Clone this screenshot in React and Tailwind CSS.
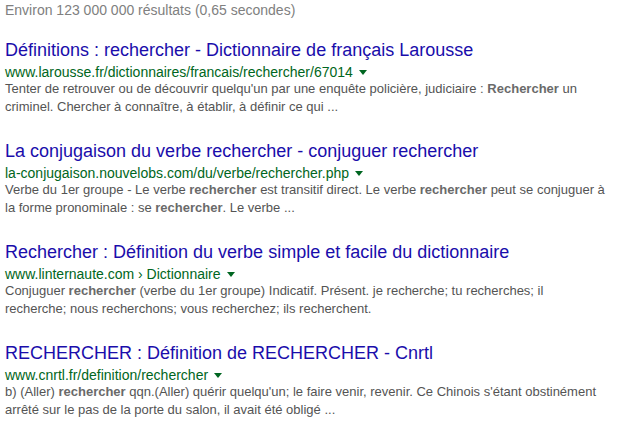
import React from 'react';

const results = [
  {
    title: 'Définitions : rechercher - Dictionnaire de français Larousse',
    url: 'www.larousse.fr/dictionnaires/francais/rechercher/67014',
    snippet: [
      'Tenter de retrouver ou de découvrir quelqu\'un par une enquête policière, judiciaire : ',
      { b: 'Rechercher' },
      ' un criminel. Chercher à connaître, à établir, à définir ce qui ...',
    ],
  },
  {
    title: 'La conjugaison du verbe rechercher - conjuguer rechercher',
    url: 'la-conjugaison.nouvelobs.com/du/verbe/rechercher.php',
    snippet: [
      'Verbe du 1er groupe - Le verbe ',
      { b: 'rechercher' },
      ' est transitif direct. Le verbe ',
      { b: 'rechercher' },
      ' peut se conjuguer à la forme pronominale : se ',
      { b: 'rechercher' },
      '. Le verbe ...',
    ],
  },
  {
    title: 'Rechercher : Définition du verbe simple et facile du dictionnaire',
    url: 'www.linternaute.com › Dictionnaire',
    snippet: [
      'Conjuguer ',
      { b: 'rechercher' },
      ' (verbe du 1er groupe) Indicatif. Présent. je recherche; tu recherches; il recherche; nous recherchons; vous recherchez; ils recherchent.',
    ],
  },
  {
    title: 'RECHERCHER : Définition de RECHERCHER - Cnrtl',
    url: 'www.cnrtl.fr/definition/rechercher',
    snippet: [
      'b) (Aller) ',
      { b: 'rechercher' },
      ' qqn.(Aller) quérir quelqu\'un; le faire venir, revenir. Ce Chinois s\'étant obstinément arrêté sur le pas de la porte du salon, il avait été obligé ...',
    ],
  },
];

const Result = ({ title, url, snippet }) => (
  <div className="mb-[23px]">
    <h3 className="text-[18px] leading-[24px] text-[#1a0dab] font-normal">{title}</h3>
    <div className="flex items-center mt-[2px] text-[14px] leading-[16px] text-[#006621]">
      <cite className="not-italic">{url}</cite>
      {/* dropdown arrow */}
      <span className="ml-[6px] mt-[1px] w-0 h-0 border-t-[5px] border-t-[#006621] border-x-[4px] border-x-transparent" />
    </div>
    <div className="w-[600px] text-[13px] leading-[18px] text-[#545454]">
      {snippet.map((part, i) =>
        typeof part === 'string' ? (
          <span key={i}>{part}</span>
        ) : (
          <b key={i} className="font-bold text-[#6a6a6a]">{part.b}</b>
        )
      )}
    </div>
  </div>
);

const App = () => {
  return (
    <div className="w-[621px] h-[437px] bg-white pl-[5px] overflow-hidden font-['Arial','Liberation_Sans',sans-serif]">
      <div className="text-[14px] leading-[20px] text-[#808080]">
        Environ 123 000 000 résultats (0,65 secondes)
      </div>
      <div className="mt-[18px]">
        {results.map((r, i) => (
          <Result key={i} {...r} />
        ))}
      </div>
    </div>
  );
};

export default App;
